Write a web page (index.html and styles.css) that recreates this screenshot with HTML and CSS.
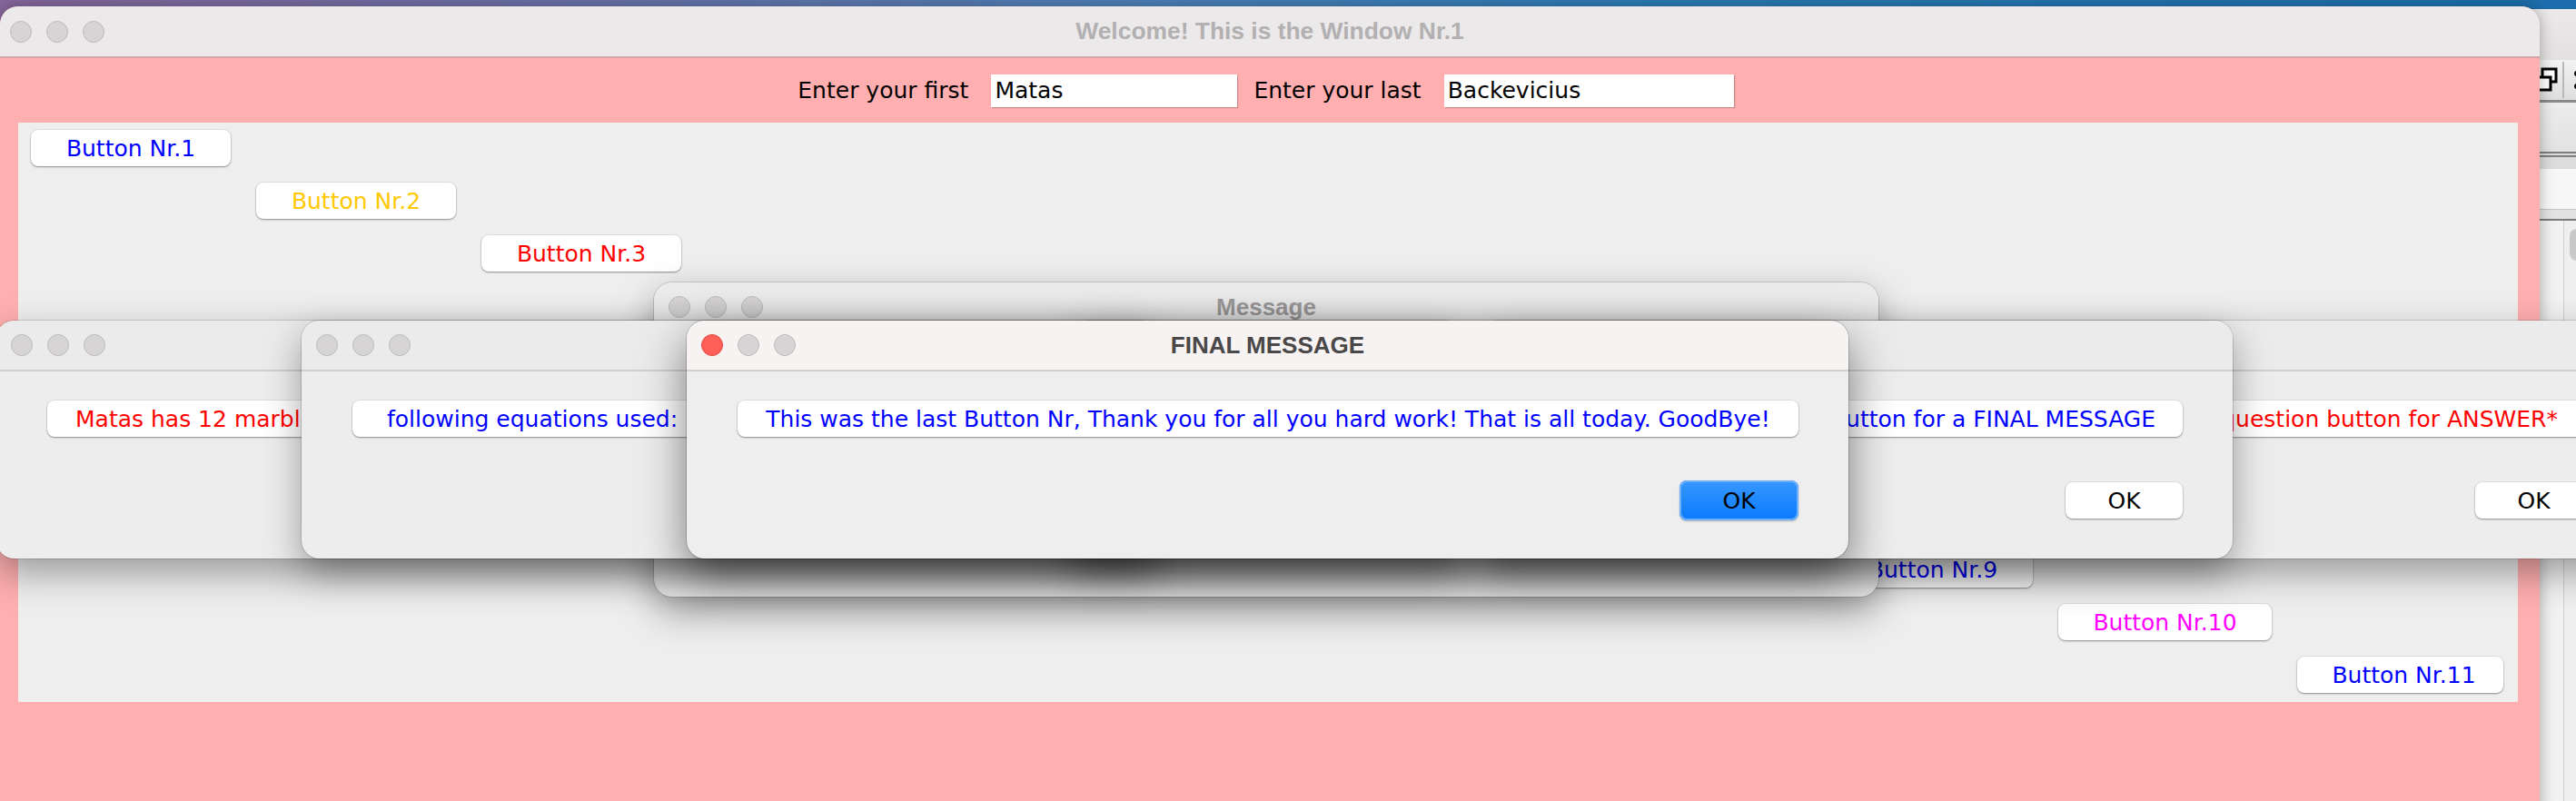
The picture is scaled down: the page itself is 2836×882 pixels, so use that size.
FILE: index.html
```html
<!DOCTYPE html>
<html lang="en">
<head>
<meta charset="utf-8">
<title>Window Nr.1</title>
<link rel="stylesheet" href="styles.css">
</head>
<body>
  <div class="win ide">
    <div class="ide-title"></div>
    <div class="ide-toolbar">
      <svg class="ide-icon" width="27" height="30" viewBox="0 0 27 30">
        <rect x="9" y="3" width="15" height="14" fill="#fff" stroke="#000" stroke-width="3"/>
        <rect x="3" y="12" width="15" height="14" fill="#fff" stroke="#000" stroke-width="3"/>
      </svg>
      <span class="ide-vsep"></span>
      <svg class="ide-icon2" width="14" height="30" viewBox="0 0 14 30">
        <circle cx="10" cy="8" r="3" fill="#000"/>
        <circle cx="10" cy="22" r="3" fill="#000"/>
      </svg>
    </div>
    <div class="ide-sep-dark"></div>
    <div class="ide-row1"></div>
    <div class="ide-double"></div>
    <div class="ide-row2"></div>
    <div class="ide-row3"></div>
    <div class="ide-row4"></div>
    <div class="ide-content">
      <div class="ide-col"></div>
      <div class="ide-col2"><div class="ide-pill"></div></div>
    </div>
  </div>

  <div class="win main">
    <div class="titlebar">
      <div class="lights"><span class="light"></span><span class="light"></span><span class="light"></span></div>
      <div class="title">Welcome! This is the Window Nr.1</div>
      <div></div>
    </div>
    <div class="namebar">
      <span class="lbl">Enter your first</span>
      <div class="field">Matas</div>
      <span class="lbl">Enter your last</span>
      <div class="field field-wide">Backevicius</div>
    </div>
    <div class="board">
      <div class="btn step-1 blue">Button Nr.1</div>
      <div class="btn step-2 orange">Button Nr.2</div>
      <div class="btn step-3 red">Button Nr.3</div>
      <div class="btn step-9 blue">Button Nr.9</div>
      <div class="btn step-10 magenta">Button Nr.10</div>
      <div class="btn step-11 blue">Button Nr.11</div>
    </div>
  </div>

  <div class="win dialog msgwin">
    <div class="titlebar">
      <div class="lights"><span class="light"></span><span class="light"></span><span class="light"></span></div>
      <div class="title">Message</div>
      <div></div>
    </div>
  </div>

  <div class="win dialog dlg-a">
    <div class="titlebar">
      <div class="lights"><span class="light"></span><span class="light"></span><span class="light"></span></div>
      <div></div>
      <div></div>
    </div>
    <div class="dialog-body">
      <div class="msg-label start red">Matas has 12 marbles</div>
    </div>
  </div>

  <div class="win dialog dlg-b">
    <div class="titlebar">
      <div class="lights"><span class="light"></span><span class="light"></span><span class="light"></span></div>
      <div></div>
      <div></div>
    </div>
    <div class="dialog-body">
      <div class="msg-label start wide blue">following equations used:</div>
    </div>
  </div>

  <div class="win dialog dlg-e">
    <div class="titlebar">
      <div class="lights"><span class="light"></span><span class="light"></span><span class="light"></span></div>
      <div></div>
      <div></div>
    </div>
    <div class="dialog-body">
      <div class="msg-label end wide red">question button for ANSWER*</div>
      <div class="actions"><div class="ok">OK</div></div>
    </div>
  </div>

  <div class="win dialog dlg-d">
    <div class="titlebar">
      <div class="lights"><span class="light"></span><span class="light"></span><span class="light"></span></div>
      <div></div>
      <div></div>
    </div>
    <div class="dialog-body">
      <div class="msg-label end blue">Button for a FINAL MESSAGE</div>
      <div class="actions"><div class="ok">OK</div></div>
    </div>
  </div>

  <div class="win dialog dlg-c">
    <div class="titlebar">
      <div class="lights"><span class="light close"></span><span class="light"></span><span class="light"></span></div>
      <div class="title">FINAL MESSAGE</div>
      <div></div>
    </div>
    <div class="dialog-body">
      <div class="msg-label blue">This was the last Button Nr, Thank you for all you hard work! That is all today. GoodBye!</div>
      <div class="actions"><div class="ok default">OK</div></div>
    </div>
  </div>
</body>
</html>
```

FILE: styles.css
```css
* { box-sizing: border-box; }
html, body { margin: 0; padding: 0; }
body {
  width: 2836px;
  height: 882px;
  overflow: hidden;
  position: relative;
  background: linear-gradient(90deg, #86679c 0%, #6b72a8 22%, #4c80b8 45%, #2a7bb5 65%, #1c6dab 100%);
  font-family: "DejaVu Sans", sans-serif;
  font-size: 25px;
  color: #000;
}

.win { position: absolute; }

/* colors */
.blue { color: #0000ff; }
.orange { color: #ffc800; }
.red { color: #ff0000; }
.magenta { color: #ff00ff; }

/* ---------- title bars ---------- */
.titlebar {
  display: grid;
  grid-template-columns: 1fr auto 1fr;
  align-items: center;
  height: 56px;
  flex: none;
  background: #ecebeb;
  border-bottom: 2px solid #d0cfcf;
}
.lights { display: flex; gap: 16px; padding-left: 16px; }
.light {
  width: 24px;
  height: 24px;
  border-radius: 50%;
  background: #d6d4d5;
  border: 1px solid #bdbbbb;
}
.light.close { background: #fe5f57; border-color: #e2463f; }
.title {
  font-family: "Liberation Sans", Arial, sans-serif;
  font-weight: bold;
  font-size: 26px;
  color: #b2b0b1;
  white-space: nowrap;
}

/* ---------- main window ---------- */
.main {
  left: 0;
  top: 7px;
  width: 2796px;
  height: 900px;
  z-index: 2;
  background: #ffafaf;
  border-radius: 20px 20px 0 0;
  overflow: hidden;
  display: flex;
  flex-direction: column;
  box-shadow: 0 0 16px rgba(0, 0, 0, 0.3);
}
.main .titlebar {
  height: 57px;
  background: #ebe9ea;
  border-bottom-color: #d2a4a5;
}
.main .lights { padding-left: 11px; }
.main .title { font-size: 26.4px; }

.namebar {
  height: 71px;
  flex: none;
  display: flex;
  align-items: center;
  justify-content: center;
  padding-right: 9px;
}
.namebar .lbl { margin-right: 25px; white-space: nowrap; }
.field {
  width: 271px;
  height: 36px;
  line-height: 36px;
  padding-left: 4px;
  background: #fff;
  box-shadow: 1px 1px 1px rgba(0, 0, 0, 0.22);
  margin-right: 18px;
}
.field-wide { width: 319px; margin-right: 0; }

/* diagonal staircase of buttons: one grid cell per button */
.board {
  flex: none;
  height: 638px;
  margin: 0 24px 0 20px;
  background: #eeeeee;
  display: grid;
  grid-template-columns: repeat(9, 220px) 235px 227px;
  grid-template-rows: repeat(11, 40px);
  column-gap: 28px;
  row-gap: 18px;
  padding: 8px 0 0 14px;
}
.step-1 { grid-area: 1 / 1; }
.step-2 { grid-area: 2 / 2; }
.step-3 { grid-area: 3 / 3; }
.step-9 { grid-area: 9 / 9; }
.step-10 { grid-area: 10 / 10; }
.step-11 { grid-area: 11 / 11; padding-left: 8px; }

.btn, .msg-label, .ok {
  background: #fff;
  border-radius: 8px;
  box-shadow: 0 1px 2px rgba(0, 0, 0, 0.38), 0 0 0 1px rgba(0, 0, 0, 0.05);
  display: flex;
  align-items: center;
  justify-content: center;
  white-space: nowrap;
}

/* ---------- dialogs ---------- */
.dialog {
  top: 353px;
  width: 1279px;
  height: 262px;
  border-radius: 20px;
  background: #ededed;
  overflow: hidden;
  display: flex;
  flex-direction: column;
  box-shadow: 0 0 0 1px rgba(0, 0, 0, 0.14), 0 16px 42px rgba(0, 0, 0, 0.36);
}
.dialog-body {
  display: flex;
  flex-direction: column;
  padding: 32px 55px 0 56px;
}
.msg-label {
  height: 40px;
  overflow: hidden;
  padding: 0 30px;
}
.msg-label.start { justify-content: flex-start; padding-left: 31px; }
.msg-label.start.wide { padding-left: 38px; }
.msg-label.end { justify-content: flex-end; padding-right: 30px; }
.msg-label.end.wide { padding-right: 38px; }

.actions { display: flex; justify-content: flex-end; margin-top: 50px; }
.ok { width: 129px; height: 40px; color: #000; }
.ok.default {
  width: 131px;
  height: 44px;
  margin-top: -2px;
  background: linear-gradient(#3797ff, #0a7aff);
  box-shadow: inset 0 0 0 2px #6cb0ff, 0 1px 2px rgba(0, 0, 0, 0.25);
}

.msgwin {
  left: 720px;
  top: 311px;
  width: 1348px;
  height: 346px;
  z-index: 3;
}
.msgwin .title { color: #9c9a9a; }
.dlg-a { left: -4px; z-index: 4; }
.dlg-b { left: 332px; z-index: 5; }
.dlg-e { left: 1630px; z-index: 6; }
.dlg-d { left: 1179px; z-index: 7; }
.dlg-c {
  left: 756px;
  z-index: 8;
  background: #efeeee;
  box-shadow: 0 0 0 1px rgba(0, 0, 0, 0.18), 0 20px 50px rgba(0, 0, 0, 0.5);
}
.dlg-c .titlebar { background: #f6f3f2; }
.dlg-c .title { color: #4a4848; }

/* ---------- background IDE window (right edge) ---------- */
.ide {
  left: 2760px;
  top: 10px;
  width: 120px;
  height: 880px;
  z-index: 1;
  background: #e5e3e3;
  display: flex;
  flex-direction: column;
}
.ide-title { height: 56px; flex: none; background: linear-gradient(#ebe9e9, #e2e0e0); }
.ide-toolbar {
  height: 44px;
  flex: none;
  display: flex;
  align-items: center;
  gap: 4px;
  padding-left: 30px;
  background: linear-gradient(#f2f2f2, #dedede);
}
.ide-icon { flex: none; }
.ide-vsep { width: 2px; height: 40px; background: #b8b8b8; flex: none; }
.ide-icon2 { flex: none; }
.ide-sep-dark { height: 3px; flex: none; background: #8a8a8a; }
.ide-row1 { height: 54px; flex: none; background: linear-gradient(#ececec, #e2e2e2); }
.ide-double { height: 6px; flex: none; background: #dcdcdc; border-top: 2px solid #7d7d7d; border-bottom: 2px solid #7d7d7d; }
.ide-row2 { height: 13px; flex: none; background: #dcdcdc; }
.ide-row3 { height: 45px; flex: none; background: #f7f7f7; border-bottom: 1px solid #c4c4c4; }
.ide-row4 { height: 12px; flex: none; background: #e2e2e2; border-bottom: 2px solid #7a7a7a; }
.ide-content { flex: 1; display: flex; }
.ide-col { width: 63px; flex: none; background: linear-gradient(90deg, #e6e6e6, #f3f3f3); border-right: 1px solid #cfcfcf; }
.ide-col2 { flex: 1; background: #efefef; }
.ide-pill { width: 30px; height: 35px; margin: 9px 0 0 6px; border-radius: 8px; background: #c8c8c8; }
```
